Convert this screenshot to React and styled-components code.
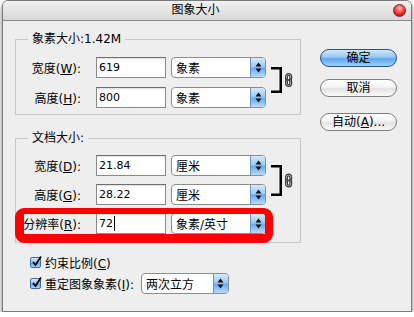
import React from 'react';
import styled, {createGlobalStyle} from 'styled-components';

const GlobalStyle = createGlobalStyle`
  html, body {
    margin: 0;
    padding: 0;
    background: #fff;
  }
  body {
    padding: 0 2px;
    font-family: "DejaVu Sans", "Noto Sans CJK SC", sans-serif;
    font-size: 12px;
    color: #000;
  }
`;

const Window = styled.div`
  width: 410px;
  height: 312px;
  box-sizing: border-box;
  border: 1px solid #7a7a7a;
  border-radius: 6px 6px 0 0;
  background: #eeeeee;
  box-shadow: 0 3px 5px rgba(0, 0, 0, 0.55);
  display: flex;
  flex-direction: column;
  overflow: hidden;
`;

const TitleBar = styled.div`
  height: 20px;
  box-sizing: border-box;
  border-bottom: 1px solid #8c8c8c;
  background: linear-gradient(#f0f0f0, #d9d9d9);
  display: flex;
  align-items: center;
  padding: 0 5px 0 0;
`;

const Title = styled.div`
  flex: 1;
  text-align: center;
  padding-left: 5px;
  padding-right: 10px;
  font-size: 12px;
  line-height: 19px;
`;

const CloseDot = styled.div`
  width: 13px;
  height: 13px;
  box-sizing: border-box;
  border-radius: 50%;
  border: 1px solid #8d1c1c;
  background: radial-gradient(circle at 50% 30%, #ffd0d0 0, #ff6a6a 30%, #d91414 75%, #b00 100%);
`;

const Body = styled.div`
  flex: 1;
  display: flex;
  padding: 18px 0 0 12px;
`;

const Main = styled.div`
  width: 286px;
  display: flex;
  flex-direction: column;
`;

const Group = styled.div`
  position: relative;
  border: 1px solid #c6c6c6;
  padding: ${p => p.$pad};
  margin-top: ${p => p.$mt || 0}px;
  display: flex;
  flex-direction: column;
  gap: 8px;
`;

const Legend = styled.span`
  position: absolute;
  top: -8px;
  left: 12px;
  padding: 0 4px;
  background: #eeeeee;
  line-height: 15px;
`;

const Linked = styled.div`
  display: flex;
  align-items: flex-start;
`;

const Rows = styled.div`
  display: flex;
  flex-direction: column;
  gap: ${p => p.$gap}px;
`;

const Row = styled.div`
  position: relative;
  display: flex;
  align-items: center;
  height: 21px;
`;

const Label = styled.span`
  width: 65px;
  margin-right: 15px;
  text-align: right;
  white-space: nowrap;
`;

const Key = styled.u`
  text-underline-offset: 1px;
`;

const TextBox = styled.div`
  width: 70px;
  height: 21px;
  box-sizing: border-box;
  border: 1px solid #8a8a8a;
  border-top-color: #6e6e6e;
  background: #fff;
  box-shadow: inset 0 1px 1px rgba(0, 0, 0, 0.12);
  display: flex;
  align-items: center;
  padding-left: 2px;
  font-size: 11px;
`;

const Caret = styled.span`
  display: inline-block;
  width: 1px;
  height: 15px;
  background: #000;
  margin-left: 1px;
`;

const Select = styled.div`
  width: ${p => p.$width}px;
  height: 21px;
  margin-left: ${p => p.$ml || 0}px;
  box-sizing: border-box;
  border: 1px solid #8c8c8c;
  border-radius: 4px;
  background: #fff;
  display: flex;
  align-items: center;
  overflow: hidden;
`;

const SelectText = styled.span`
  flex: 1;
  padding-left: 4px;
  white-space: nowrap;
`;

const Stepper = styled.div`
  width: 14px;
  height: 100%;
  border-left: 1px solid #6b93c8;
  background: linear-gradient(#d6eafc, #9ccaf6 45%, #6aaaf0 55%, #b6dcfb);
  display: flex;
  align-items: center;
  justify-content: center;
`;

const LinkMark = styled.svg`
  margin-left: 5px;
  margin-top: ${p => p.$mt}px;
  flex: none;
`;

const Highlight = styled.div`
  position: absolute;
  left: -1px;
  top: -5px;
  width: 258px;
  height: 35px;
  box-sizing: border-box;
  border: 7px solid #ff0000;
  border-width: 6px 8px 9px 9px;
  border-radius: 9px;
  pointer-events: none;
`;

const Checks = styled.div`
  margin-top: 12px;
  padding-left: 15px;
  display: flex;
  flex-direction: column;
  gap: 4px;
`;

const CheckRow = styled.div`
  display: flex;
  align-items: center;
  height: ${p => p.$h}px;
  gap: 4px;
`;

const Box = styled.div`
  width: 11px;
  height: 11px;
  box-sizing: border-box;
  border: 1px solid #3d6aa8;
  border-radius: 2px;
  background: linear-gradient(#d9ecfd, #86bdf3 50%, #5ea4ec 55%, #a9d4fa);
  position: relative;
`;

const Tick = styled.svg`
  position: absolute;
  left: 0;
  top: -3px;
`;

const Buttons = styled.div`
  margin-left: 19px;
  padding-top: 10px;
  display: flex;
  flex-direction: column;
`;

const Button = styled.div`
  width: 77px;
  height: 18px;
  margin-top: ${p => p.$mt || 0}px;
  box-sizing: border-box;
  border-radius: 9px;
  border: 1px solid ${p => (p.$primary ? '#2c4f8e' : '#7d7d7d')};
  background: ${p =>
    p.$primary
      ? 'linear-gradient(#d2e9fd, #93c8f6 45%, #5ea7ef 55%, #9cd2fb)'
      : 'linear-gradient(#ffffff, #f3f3f3 45%, #e2e2e2 55%, #fafafa)'};
  display: flex;
  align-items: center;
  justify-content: center;
  font-size: 12px;
  line-height: 16px;
`;

function Arrows() {
  return (
    <svg width="7" height="11" viewBox="0 0 7 11">
      <path d="M3.5 0.5 L6.5 4.5 H0.5 Z M3.5 10.5 L6.5 6.5 H0.5 Z" fill="#111" />
    </svg>
  );
}

function Bracket({height, mt}) {
  const mid = height / 2;
  return (
    <LinkMark width="24" height={height} $mt={mt} viewBox={`0 0 24 ${height}`}>
      <path
        d={`M0 1.25 H9.75 V${height - 1.25} H0`}
        fill="none"
        stroke="#000"
        strokeWidth="2.5"
      />
      <g transform={`translate(14 ${mid - 7})`} fill="none" stroke="#3c3c3c" strokeWidth="1.2">
        <rect x="0.6" y="0.6" width="6" height="8" rx="3" fill="#e0e0e0" />
        <rect x="0.6" y="5.4" width="6" height="8" rx="3" fill="#c8c8c8" fillOpacity="0.6" />
        <rect x="2.4" y="2.4" width="2.4" height="4.5" rx="1.2" fill="#fff" />
        <rect x="2.4" y="7.2" width="2.4" height="4.5" rx="1.2" fill="#fff" />
      </g>
    </LinkMark>
  );
}

function FieldRow({label, accel, value, unit, caret, children}) {
  return (
    <Row>
      <Label>
        {label}(<Key>{accel}</Key>):
      </Label>
      <TextBox>
        {value}
        {caret && <Caret />}
      </TextBox>
      <Select $width={95} $ml={5}>
        <SelectText>{unit}</SelectText>
        <Stepper>
          <Arrows />
        </Stepper>
      </Select>
      {children}
    </Row>
  );
}

function CheckBox() {
  return (
    <Box>
      <Tick width="12" height="13" viewBox="0 0 12 13">
        <path d="M2 7 L4.5 10 L10 1.5" fill="none" stroke="#000" strokeWidth="1.8" />
      </Tick>
    </Box>
  );
}

export default function App() {
  return (
    <>
      <GlobalStyle />
      <Window>
        <TitleBar>
          <Title>图象大小</Title>
          <CloseDot />
        </TitleBar>
        <Body>
          <Main>
            <Group $pad="17px 0 6px 0">
              <Legend>象素大小:1.42M</Legend>
              <Linked>
                <Rows $gap={9}>
                  <FieldRow label="宽度" accel="W" value="619" unit="象素" />
                  <FieldRow label="高度" accel="H" value="800" unit="象素" />
                </Rows>
                <Bracket height={26} mt={10} />
              </Linked>
            </Group>
            <Group $pad="16px 0 8px 0" $mt={23}>
              <Legend>文档大小:</Legend>
              <Linked>
                <Rows $gap={8}>
                  <FieldRow label="宽度" accel="D" value="21.84" unit="厘米" />
                  <FieldRow label="高度" accel="G" value="28.22" unit="厘米" />
                </Rows>
                <Bracket height={31} mt={10} />
              </Linked>
              <FieldRow label="分辨率" accel="R" value="72" unit="象素/英寸" caret>
                <Highlight />
              </FieldRow>
            </Group>
            <Checks>
              <CheckRow $h={14}>
                <CheckBox />
                <span>
                  约束比例(<Key>C</Key>)
                </span>
              </CheckRow>
              <CheckRow $h={21}>
                <CheckBox />
                <span>
                  重定图象象素(<Key>I</Key>):
                </span>
                <Select $width={88} $ml={3}>
                  <SelectText>两次立方</SelectText>
                  <Stepper>
                    <Arrows />
                  </Stepper>
                </Select>
              </CheckRow>
            </Checks>
          </Main>
          <Buttons>
            <Button $primary>确定</Button>
            <Button $mt={12}>取消</Button>
            <Button $mt={16}>
              <span>
                自动(<Key>A</Key>)...
              </span>
            </Button>
          </Buttons>
        </Body>
      </Window>
    </>
  );
}
